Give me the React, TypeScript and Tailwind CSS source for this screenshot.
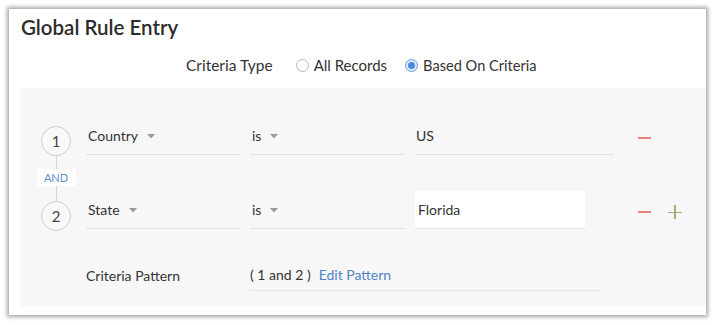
const Caret = () => (
  <svg width="8" height="5" viewBox="0 0 8 5" className="ml-[9px] mt-[1px]">
    <path d="M0 0 L8 0 L4 4.5 Z" fill="#9a9a9a" />
  </svg>
)

const Circle = ({ n }: { n: number }) => (
  <div className="flex h-[30px] w-[30px] items-center justify-center rounded-full border-[1.5px] border-[#cfcfcf] bg-[#f9f9f9] text-[15px] text-[#444]">
    {n}
  </div>
)

const SelectField = ({ label, width }: { label: string; width: string }) => (
  <div className={`flex h-[38px] items-center border-b border-[#e2e2e2] pl-[2px] text-[14px] text-[#333] ${width}`}>
    {label}
    <Caret />
  </div>
)

export default function App() {
  return (
    <div className="h-[325px] w-[716px] bg-white pl-[9px] pt-[9px] font-['Lato','Liberation_Sans',sans-serif]">
      <div className="flex h-[306px] w-[697px] flex-col bg-white shadow-[0_0_4px_2px_rgba(0,0,0,0.35)]">
        <h1 className="pl-[12px] pt-[6px] text-[20.5px] font-semibold leading-[24px] text-[#2c2c2c]">Global Rule Entry</h1>

        <div className="mt-[15px] flex items-center pl-[177px] text-[#333]">
          <span className="text-[15.5px]">Criteria Type</span>
          <label className="ml-[23px] flex items-center text-[15px]">
            <span className="h-[13px] w-[13px] rounded-full border border-[#b8b8b8] bg-white" />
            <span className="ml-[5px]">All Records</span>
          </label>
          <label className="ml-[18px] flex items-center text-[14.6px]">
            <span className="flex h-[13px] w-[13px] items-center justify-center rounded-full border border-[#6b9ee0] bg-[#dfeafa]">
              <span className="h-[7px] w-[7px] rounded-full bg-[#4a88dd]" />
            </span>
            <span className="ml-[5px]">Based On Criteria</span>
          </label>
        </div>

        <div className="ml-[11px] mt-[11px] flex h-[218px] bg-[#f7f7f7] pl-[21px] pt-[29px]">
          <div className="flex w-[30px] flex-col items-center pt-[9px]">
            <Circle n={1} />
            <div className="h-[13px] w-px bg-[#d6d6d6]" />
            <div className="flex h-[17px] w-[39px] items-center justify-center bg-white text-[11px] text-[#5b8fd0]">AND</div>
            <div className="h-[15px] w-px bg-[#d6d6d6]" />
            <Circle n={2} />
          </div>

          <div className="ml-[15px] flex flex-col">
            <div className="flex items-center">
              <SelectField label="Country" width="w-[155px]" />
              <SelectField label="is" width="ml-[9px] w-[155px]" />
              <div className="ml-[10px] flex h-[38px] w-[199px] items-center border-b border-[#e2e2e2] pl-px text-[14px] text-[#333]">US</div>
              <span className="ml-[24px] mt-[4px] h-[2px] w-[13px] bg-[#e8837d]" />
            </div>

            <div className="mt-[36px] flex items-center">
              <SelectField label="State" width="w-[155px]" />
              <SelectField label="is" width="ml-[9px] w-[155px]" />
              <div className="ml-[10px] flex h-[38px] w-[170px] items-center border-b border-[#e2e2e2] bg-white pl-[3px] text-[14px] text-[#333]">Florida</div>
              <span className="ml-[53px] mt-[4px] h-[2px] w-[13px] bg-[#e8837d]" />
              <span className="relative ml-[17px] mt-[4px] h-[1.5px] w-[14px] bg-[#9fb177]">
                <span className="absolute left-[6.25px] top-[-6.25px] h-[14px] w-[1.5px] bg-[#9fb177]" />
              </span>
            </div>

            <div className="mt-[30px] flex h-[32px] items-center text-[14px] text-[#333]">
              <span className="w-[164px]">Criteria Pattern</span>
              <div className="flex h-[32px] w-[350px] items-center border-b border-[#e6e6e6]">
                <span>( 1 and 2 )</span>
                <span className="ml-[8px] text-[#4d83c9]">Edit Pattern</span>
              </div>
            </div>
          </div>
        </div>
      </div>
    </div>
  )
}
